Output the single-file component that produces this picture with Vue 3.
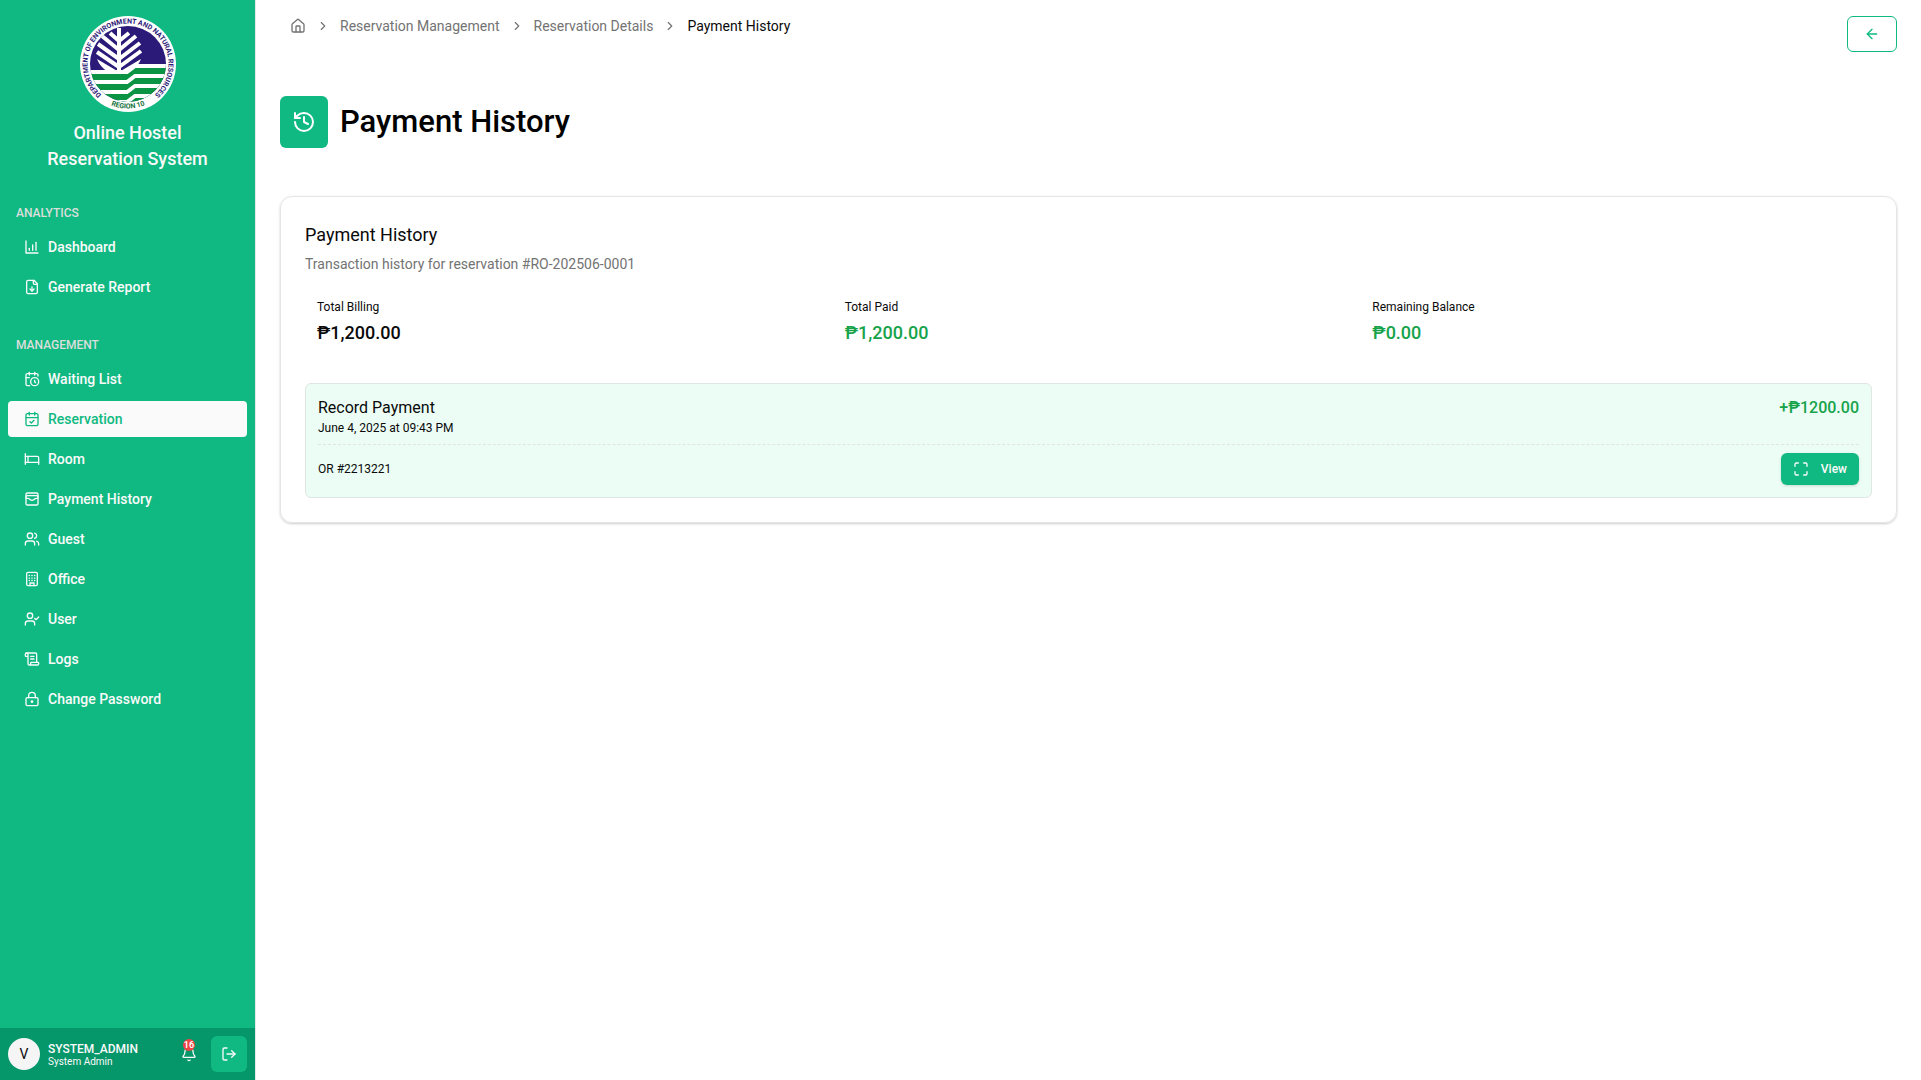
<script setup>
const icons = {
  chart: '<path d="M3 3v18h18"/><path d="M13 17V9"/><path d="M18 17V5"/><path d="M8 17v-3"/>',
  fileDown: '<path d="M15 2H6a2 2 0 0 0-2 2v16a2 2 0 0 0 2 2h12a2 2 0 0 0 2-2V7Z"/><path d="M14 2v4a2 2 0 0 0 2 2h4"/><path d="M12 18v-6"/><path d="m9 15 3 3 3-3"/>',
  calendarClock: '<path d="M21 7.5V6a2 2 0 0 0-2-2H5a2 2 0 0 0-2 2v14a2 2 0 0 0 2 2h3.5"/><path d="M16 2v4"/><path d="M8 2v4"/><path d="M3 10h5"/><path d="M17.5 17.5 16 16.3V14"/><circle cx="16" cy="16" r="6"/>',
  calendarCheck: '<path d="M8 2v4"/><path d="M16 2v4"/><rect width="18" height="18" x="3" y="4" rx="2"/><path d="M3 10h18"/><path d="m9 16 2 2 4-4"/>',
  bed: '<path d="M2 4v16"/><path d="M2 8h18a2 2 0 0 1 2 2v10"/><path d="M2 17h20"/><path d="M6 8v9"/>',
  wallet: '<rect width="18" height="18" x="3" y="3" rx="2"/><path d="M3 9a2 2 0 0 1 2-2h14a2 2 0 0 1 2 2"/><path d="M3 11h3c.8 0 1.6.3 2.1.9l1.1.9c1.6 1.6 4.1 1.6 5.7 0l1.1-.9c.5-.5 1.3-.9 2.1-.9H21"/>',
  users: '<path d="M16 21v-2a4 4 0 0 0-4-4H6a4 4 0 0 0-4 4v2"/><circle cx="9" cy="7" r="4"/><path d="M22 21v-2a4 4 0 0 0-3-3.87"/><path d="M16 3.13a4 4 0 0 1 0 7.75"/>',
  building: '<rect width="16" height="20" x="4" y="2" rx="2"/><path d="M9 22v-4h6v4"/><path d="M7.8 6.7h.4M11.8 6.7h.4M15.8 6.7h.4M7.8 10.7h.4M11.8 10.7h.4M15.8 10.7h.4M7.8 14.3h.4M11.8 14.3h.4M15.8 14.3h.4"/>',
  userCheck: '<path d="M16 21v-2a4 4 0 0 0-4-4H6a4 4 0 0 0-4 4v2"/><circle cx="9" cy="7" r="4"/><path d="m16 11 2 2 4-4"/>',
  scroll: '<path d="M15 12h-5"/><path d="M15 8h-5"/><path d="M19 17V5a2 2 0 0 0-2-2H4"/><path d="M8 21h12a2 2 0 0 0 2-2v-1a1 1 0 0 0-1-1H11a1 1 0 0 0-1 1v1a2 2 0 1 1-4 0V5a2 2 0 1 0-4 0v2a1 1 0 0 0 1 1h3"/>',
  lock: '<circle cx="12" cy="16" r="1"/><rect x="3" y="10" width="18" height="12" rx="2"/><path d="M7 10V7a5 5 0 0 1 10 0v3"/>',
  bell: '<path d="M10.27 21a2 2 0 0 0 3.46 0"/><path d="M3.26 15.33A1 1 0 0 0 4 17h16a1 1 0 0 0 .74-1.67C19.41 13.96 18 12.5 18 8A6 6 0 0 0 6 8c0 4.5-1.41 5.96-2.74 7.33"/>',
  logout: '<path d="M9 21H5a2 2 0 0 1-2-2V5a2 2 0 0 1 2-2h4"/><path d="m16 17 5-5-5-5"/><path d="M21 12H9"/>',
  house: '<path d="M15 21v-8a1 1 0 0 0-1-1h-4a1 1 0 0 0-1 1v8"/><path d="M3 10a2 2 0 0 1 .71-1.53l7-6a2 2 0 0 1 2.58 0l7 6A2 2 0 0 1 21 10v9a2 2 0 0 1-2 2H5a2 2 0 0 1-2-2z"/>',
  chevron: '<path d="m9 18 6-6-6-6"/>',
  arrowLeft: '<path d="m12 19-7-7 7-7"/><path d="M19 12H5"/>',
  history: '<path d="M3 12a9 9 0 1 0 9-9 9.75 9.75 0 0 0-6.74 2.74L3 8"/><path d="M3 3v5h5"/><path d="M12 7v5l4 2"/>',
  maximize: '<path d="M8 3H5a2 2 0 0 0-2 2v3"/><path d="M21 8V5a2 2 0 0 0-2-2h-3"/><path d="M3 16v3a2 2 0 0 0 2 2h3"/><path d="M16 21h3a2 2 0 0 0 2-2v-3"/>',
}

const groups = [
  {
    label: 'ANALYTICS',
    items: [
      { text: 'Dashboard', icon: 'chart' },
      { text: 'Generate Report', icon: 'fileDown' },
    ],
  },
  {
    label: 'MANAGEMENT',
    items: [
      { text: 'Waiting List', icon: 'calendarClock' },
      { text: 'Reservation', icon: 'calendarCheck', active: true },
      { text: 'Room', icon: 'bed' },
      { text: 'Payment History', icon: 'wallet' },
      { text: 'Guest', icon: 'users' },
      { text: 'Office', icon: 'building' },
      { text: 'User', icon: 'userCheck' },
      { text: 'Logs', icon: 'scroll' },
      { text: 'Change Password', icon: 'lock' },
    ],
  },
]

const totals = [
  { label: 'Total Billing', value: '₱1,200.00' },
  { label: 'Total Paid', value: '₱1,200.00', green: true },
  { label: 'Remaining Balance', value: '₱0.00', green: true },
]
</script>

<template>
  <div class="layout">
    <aside class="sidebar">
      <header class="brand">
        <svg class="logo" viewBox="0 0 96 96" role="img" aria-label="Department of Environment and Natural Resources">
          <defs>
            <clipPath id="seal"><circle cx="48" cy="48" r="38" /></clipPath>
            <path id="ring" d="M48 88.500A40.500 40.500 0 1 1 48.1 88.500" />
            <path id="ringBottom" d="M14 77A45 45 0 0 0 82 77" />
          </defs>
          <circle cx="48" cy="48" r="48" fill="#fff" />
          <g clip-path="url(#seal)">
            <rect width="96" height="96" fill="#2b1a78" />
            <path d="M0 57H47L55 51H96V96H0Z" fill="#0b9444" />
            <g fill="none" stroke="#fff" stroke-width="4">
              <path d="M0 56H47L55 50H96" />
              <path d="M0 66H47L55 60H96" />
              <path d="M0 76H47L55 70H96" />
              <path d="M0 86H47L55 80H96" />
              <path d="M39 12V56M39 25 30 17M39 34 22 20M39 43 18 28M39 51 17 36M39 25 49 17M39 34 56 20M39 43 60 27M39 51 61 35" />
            </g>
            <path d="M17 43 39 56 61 43Q58 51 49 56H28Q20 51 17 43Z" fill="#fff" />
          </g>
          <text class="ring-text"><textPath href="#ring" startOffset="50%" text-anchor="middle">DEPARTMENT OF ENVIRONMENT AND NATURAL RESOURCES</textPath></text>
          <text class="region-text"><textPath href="#ringBottom" startOffset="50%" text-anchor="middle">REGION 10</textPath></text>
        </svg>
        <div class="brand-name">Online Hostel<br />Reservation System</div>
      </header>

      <nav class="nav">
        <section v-for="g in groups" :key="g.label" class="group">
          <h2 class="group-label">{{ g.label }}</h2>
          <ul class="menu">
            <li v-for="item in g.items" :key="item.text">
              <a href="#" class="menu-link" :class="{ active: item.active }">
                <svg class="icon" viewBox="0 0 24 24" v-html="icons[item.icon]" />
                <span>{{ item.text }}</span>
              </a>
            </li>
          </ul>
        </section>
      </nav>

      <footer class="account">
        <span class="avatar">V</span>
        <div class="who">
          <span class="who-name">SYSTEM_ADMIN</span>
          <span class="who-role">System Admin</span>
        </div>
        <button class="bell" type="button" aria-label="Notifications">
          <svg class="icon" viewBox="0 0 24 24" v-html="icons.bell" />
          <span class="badge">16</span>
        </button>
        <button class="logout" type="button" aria-label="Log out">
          <svg class="icon" viewBox="0 0 24 24" v-html="icons.logout" />
        </button>
      </footer>
    </aside>

    <main class="main">
      <div class="topbar">
        <nav class="crumbs" aria-label="Breadcrumb">
          <a href="#" aria-label="Home"><svg class="icon" viewBox="0 0 24 24" v-html="icons.house" /></a>
          <svg class="chevron" viewBox="0 0 24 24" v-html="icons.chevron" />
          <a href="#">Reservation Management</a>
          <svg class="chevron" viewBox="0 0 24 24" v-html="icons.chevron" />
          <a href="#">Reservation Details</a>
          <svg class="chevron" viewBox="0 0 24 24" v-html="icons.chevron" />
          <span class="current">Payment History</span>
        </nav>
        <button class="back" type="button" aria-label="Back">
          <svg class="icon" viewBox="0 0 24 24" v-html="icons.arrowLeft" />
        </button>
      </div>

      <div class="heading">
        <span class="heading-icon"><svg viewBox="0 0 24 24" v-html="icons.history" /></span>
        <h1>Payment History</h1>
      </div>

      <section class="card">
        <h2 class="card-title">Payment History</h2>
        <p class="card-sub">Transaction history for reservation #RO-202506-0001</p>

        <dl class="totals">
          <div v-for="t in totals" :key="t.label" class="total">
            <dt>{{ t.label }}</dt>
            <dd :class="{ green: t.green }">{{ t.value }}</dd>
          </div>
        </dl>

        <article class="record">
          <div class="record-top">
            <div>
              <h3>Record Payment</h3>
              <p class="small">June 4, 2025 at 09:43 PM</p>
            </div>
            <span class="amount">+₱1200.00</span>
          </div>
          <div class="record-bottom">
            <span class="small">OR #2213221</span>
            <button class="view" type="button">
              <svg class="icon" viewBox="0 0 24 24" v-html="icons.maximize" />
              View
            </button>
          </div>
        </article>
      </section>
    </main>
  </div>
</template>

<style>
body {
  background: #fff;
}
</style>

<style scoped>
* {
  box-sizing: border-box;
  margin: 0;
  padding: 0;
}
.layout {
  display: flex;
  min-height: 100vh;
  font-family: Roboto, "Liberation Sans", sans-serif;
  font-size: 14px;
  line-height: 20px;
  color: #0a0a0a;
}
svg {
  display: block;
  flex: none;
  fill: none;
  stroke: currentColor;
  stroke-width: 2;
  stroke-linecap: round;
  stroke-linejoin: round;
}
.icon {
  width: 16px;
  height: 16px;
}
button {
  display: flex;
  align-items: center;
  justify-content: center;
  border: 0;
  font: inherit;
  color: inherit;
  background: none;
  cursor: pointer;
}
a {
  color: inherit;
  text-decoration: none;
}

.sidebar {
  display: flex;
  flex-direction: column;
  flex: none;
  width: 256px;
  background: #10b981;
  border-right: 1px solid #e5e7eb;
  color: #fafafa;
}
.brand {
  display: flex;
  flex-direction: column;
  align-items: center;
  gap: 8px;
  padding: 16px 8px 25px;
}
.logo {
  width: 96px;
  height: 96px;
  stroke: none;
}
.logo g {
  stroke-linecap: butt;
  stroke-linejoin: miter;
}
.ring-text {
  font-size: 7px;
  font-weight: 700;
  fill: #2b1a78;
}
.region-text {
  font-size: 7px;
  font-weight: 700;
  fill: #14723c;
}
.brand-name {
  font-size: 18px;
  font-weight: 500;
  line-height: 26px;
  text-align: center;
}
.nav {
  flex: 1;
}
.group {
  padding: 0 8px 24px;
}
.group-label {
  padding: 0 8px;
  font-size: 12px;
  font-weight: 500;
  line-height: 32px;
  color: #dcdedd;
}
.menu {
  display: flex;
  flex-direction: column;
  gap: 4px;
  list-style: none;
}
.menu-link {
  display: flex;
  align-items: center;
  gap: 8px;
  height: 36px;
  padding: 0 16px;
  border-radius: 4px;
  font-weight: 500;
}
.menu-link.active {
  background: #fafafa;
  color: #10b981;
}
.account {
  display: flex;
  align-items: center;
  padding: 8px;
  background: #059669;
}
.avatar {
  flex: none;
  width: 32px;
  border-radius: 50%;
  background: #f5f5f5;
  color: #0a0a0a;
  line-height: 32px;
  text-align: center;
}
.who {
  display: flex;
  flex: 1;
  flex-direction: column;
  padding: 2px 0 0 8px;
}
.who-name {
  font-size: 12px;
  font-weight: 500;
  line-height: 14px;
}
.who-role {
  font-size: 10px;
  line-height: 12px;
}
.bell {
  position: relative;
  margin-right: 14px;
}
.badge {
  position: absolute;
  top: -7px;
  left: 2px;
  width: 12px;
  border-radius: 50%;
  background: #ef4444;
  color: #fff;
  font-size: 9px;
  font-weight: 600;
  line-height: 12px;
  text-align: center;
}
.logout {
  width: 36px;
  height: 36px;
  border-radius: 6px;
  background: #10b981;
}

.main {
  flex: 1;
  padding: 16px 24px;
}
.topbar {
  display: flex;
  align-items: flex-start;
  justify-content: space-between;
}
.crumbs {
  display: flex;
  align-items: center;
  gap: 10px;
  padding-left: 10px;
  color: #737373;
}
.chevron {
  width: 14px;
  height: 14px;
}
.current {
  color: #0a0a0a;
}
.back {
  width: 50px;
  height: 36px;
  border: 1px solid #10b981;
  border-radius: 6px;
  color: #10b981;
}
.heading {
  display: flex;
  align-items: center;
  gap: 12px;
  padding: 44px 0 48px;
}
.heading-icon {
  display: flex;
  align-items: center;
  justify-content: center;
  width: 48px;
  height: 52px;
  border-radius: 6px;
  background: #10b981;
  color: #fff;
}
.heading-icon svg {
  width: 24px;
  height: 24px;
}
h1 {
  font-size: 31px;
  font-weight: 500;
  line-height: 36px;
  color: #000;
}
.card {
  padding: 24px;
  border: 1px solid #e5e5e5;
  border-radius: 12px;
  box-shadow: 0 1px 3px rgb(0 0 0 / 10%), 0 1px 2px rgb(0 0 0 / 10%);
}
.card-title {
  font-size: 18px;
  font-weight: 400;
  line-height: 28px;
}
.card-sub {
  padding-top: 5px;
  color: #737373;
}
.totals {
  display: grid;
  grid-template-columns: repeat(3, 1fr);
  gap: 16px;
  padding: 13px 0 24px;
}
.total {
  padding: 12px;
}
dt,
.small {
  font-size: 12px;
  line-height: 16px;
}
dd {
  padding-top: 4px;
  font-size: 18px;
  font-weight: 500;
  line-height: 28px;
}
.green,
.amount {
  color: #16a34a;
}
.record {
  padding: 12px;
  border: 1px solid #dfe7e3;
  border-radius: 6px;
  background: #ecfdf5;
}
.record-top {
  display: flex;
  justify-content: space-between;
  padding-bottom: 8px;
  border-bottom: 1px dashed #dfe5e2;
}
h3,
.amount {
  font-size: 16px;
  font-weight: 400;
  line-height: 24px;
}
.amount {
  font-weight: 500;
}
.record-bottom {
  display: flex;
  align-items: center;
  justify-content: space-between;
  padding-top: 8px;
}
.view {
  gap: 12px;
  height: 32px;
  padding: 0 12px;
  border-radius: 6px;
  background: #10b981;
  box-shadow: 0 1px 3px rgb(0 0 0 / 14%);
  color: #fafafa;
  font-size: 12px;
  font-weight: 500;
}
</style>
